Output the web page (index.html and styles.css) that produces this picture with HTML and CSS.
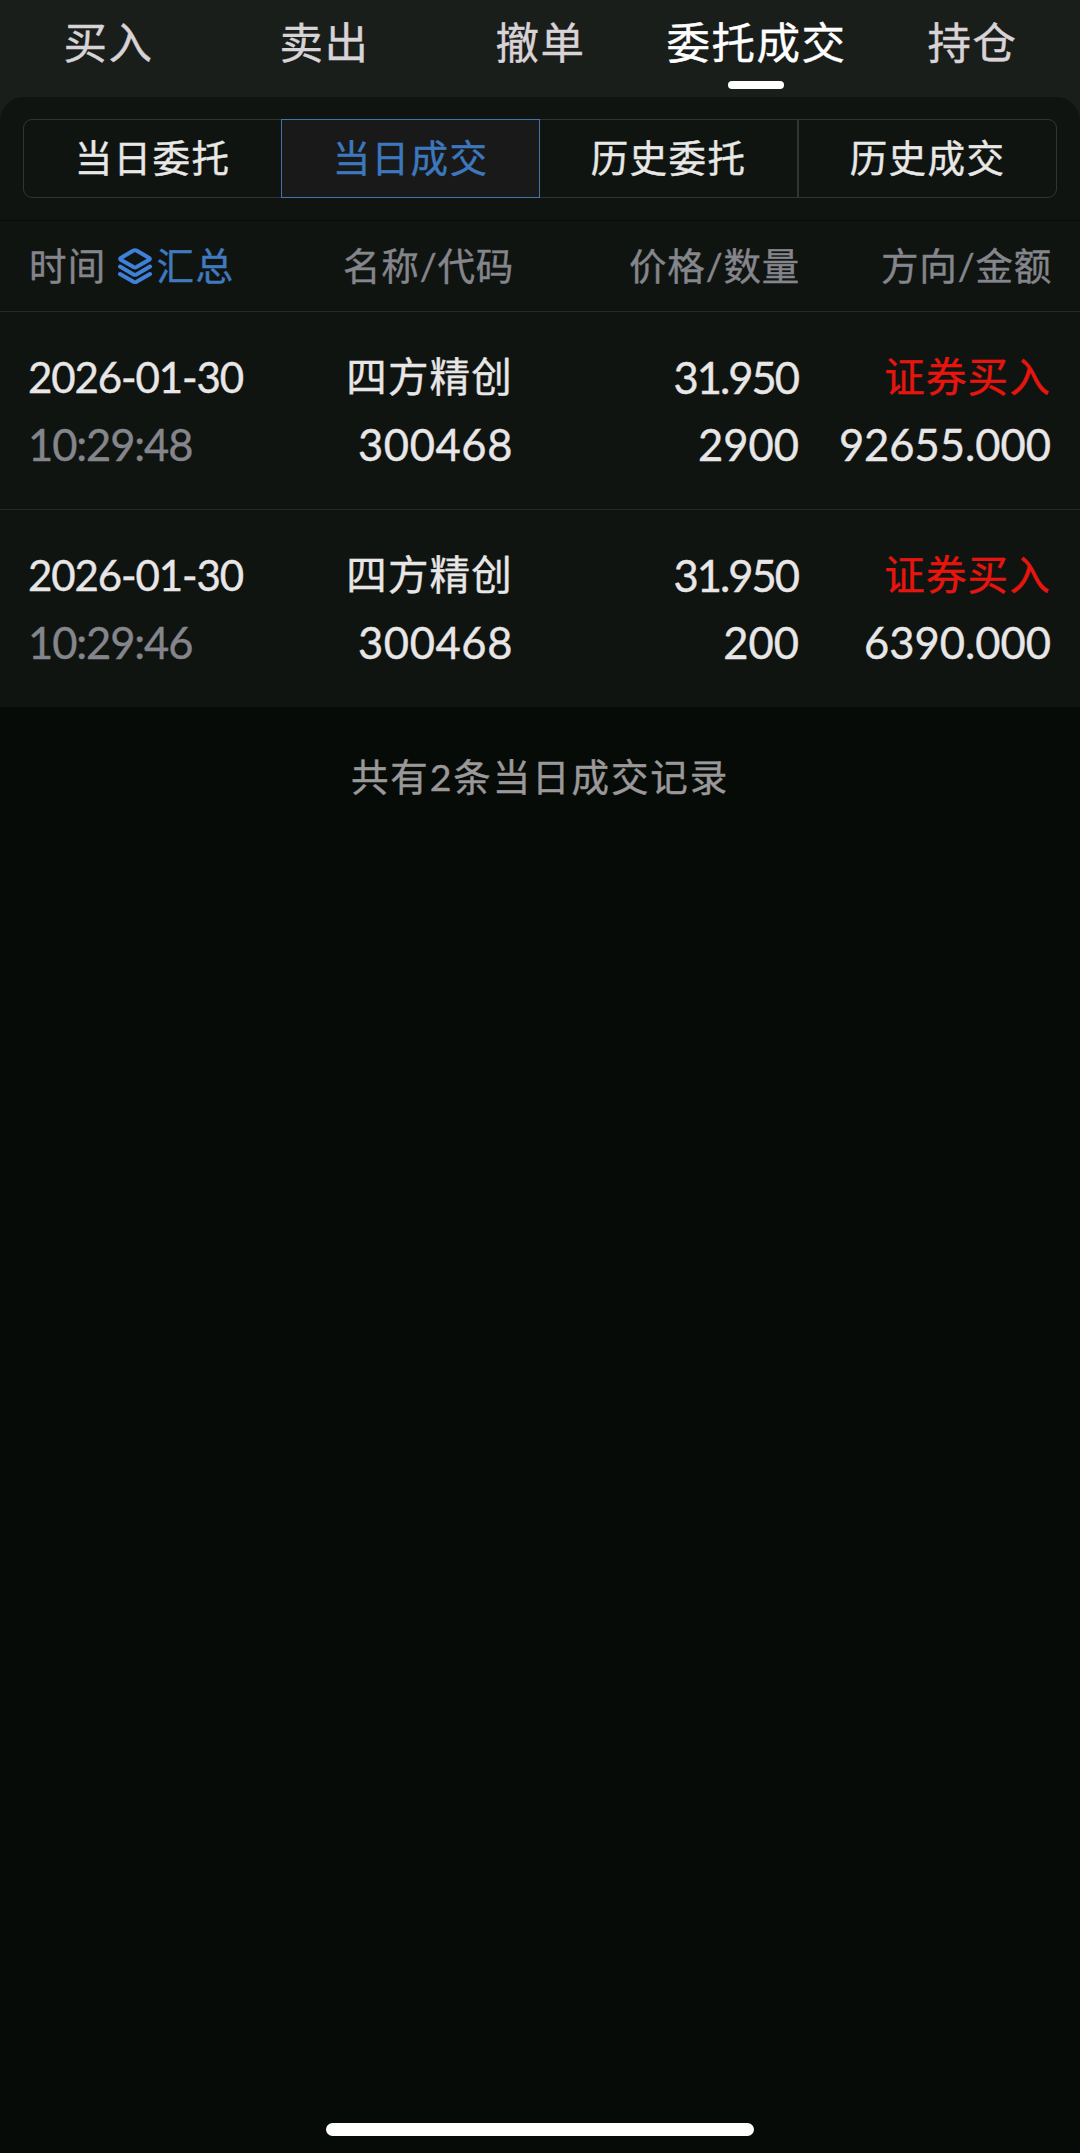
FILE: index.html
```html
<!DOCTYPE html>
<html lang="zh-CN">
  <head>
    <meta charset="UTF-8" />
    <meta name="viewport" content="width=device-width, initial-scale=1.0" />
    <title>当日成交</title>
    <link rel="stylesheet" href="styles.css">
  </head>
  <body>
    <nav class="tabs">
      <a class="tab">买入</a>
      <a class="tab">卖出</a>
      <a class="tab">撤单</a>
      <a class="tab active">委托成交</a>
      <a class="tab">持仓</a>
    </nav>
    <main>
      <section class="panel">
        <div class="segments">
          <button class="segment">当日委托</button>
          <button class="segment selected">当日成交</button>
          <button class="segment">历史委托</button>
          <button class="segment">历史成交</button>
        </div>
      </section>
      <section class="list">
        <div class="row head">
          <div class="time">
            <span>时间</span>
            <svg class="layers" viewBox="0 0 34 36" fill="none" stroke="currentColor" stroke-width="4" stroke-linecap="round" stroke-linejoin="round">
              <path d="M15.5 2.6Q17 1.8 18.5 2.6L31.2 9.9Q32.6 10.8 31.2 11.7L18.5 19Q17 19.8 15.5 19L2.8 11.7Q1.4 10.8 2.8 9.9Z" />
              <path d="M2 18.6L15.5 26.4Q17 27.2 18.5 26.4L32 18.6" />
              <path d="M2 26L15.5 33.8Q17 34.6 18.5 33.8L32 26" />
            </svg>
            <span class="summary">汇总</span>
          </div>
          <div>名称/代码</div>
          <div>价格/数量</div>
          <div>方向/金额</div>
        </div>
        <div class="row record">
          <div class="time">
            <p class="date">2026-01-30</p>
            <p class="clock">10:29:48</p>
          </div>
          <div>
            <p class="name">四方精创</p>
            <p class="code">300468</p>
          </div>
          <div>
            <p class="price">31.950</p>
            <p>2900</p>
          </div>
          <div>
            <p class="name buy">证券买入</p>
            <p class="amount">92655.000</p>
          </div>
        </div>
        <div class="row record">
          <div class="time">
            <p class="date">2026-01-30</p>
            <p class="clock">10:29:46</p>
          </div>
          <div>
            <p class="name">四方精创</p>
            <p class="code">300468</p>
          </div>
          <div>
            <p class="price">31.950</p>
            <p>200</p>
          </div>
          <div>
            <p class="name buy">证券买入</p>
            <p class="amount">6390.000</p>
          </div>
        </div>
      </section>
      <p class="total">共有2条当日成交记录</p>
    </main>
    <div class="home-bar"></div>
  </body>
</html>
```
FILE: styles.css
```css
* {
  box-sizing: border-box;
}
body {
  display: flex;
  flex-direction: column;
  height: 2153px;
  margin: 0;
  background-color: #060b07;
  font-family: Lato, "Noto Sans CJK SC", sans-serif;
  color: #e8e6e6;
  -webkit-text-stroke: 0.4px currentColor;
}
p {
  margin: 0;
}
.tabs {
  display: grid;
  grid-template-columns: repeat(5, 216px);
  height: 97px;
  background-color: #1a1e1b;
}
.tab {
  display: flex;
  flex-direction: column;
  align-items: center;
  font-size: 43.5px;
  letter-spacing: 1.5px;
  line-height: 81px;
  padding: 2px 0 0 1px;
  white-space: nowrap;
  color: #d8d3d6;
}
.tab.active {
  color: #fff;
}
.tab.active::after {
  content: "";
  width: 56px;
  height: 8px;
  margin: -2px 1px 0 0;
  border-radius: 4px;
  background-color: #fff;
}
main {
  flex: 1;
  background: linear-gradient(#1a1e1b 24px, transparent 24px);
}
.panel {
  height: 124px;
  padding: 22px 23px 0;
  border-bottom: 1px solid #080b09;
  border-radius: 24px 24px 0 0;
  background-color: #101411;
}
.segments {
  display: grid;
  grid-template-columns: 257px 259px 257px 259px;
  height: 79px;
  border: 1px solid #333432;
  border-radius: 9px;
}
.segment {
  margin: -1px 0;
  padding: 0 0 7px;
  border: 0;
  background: none;
  font-family: inherit;
  font-size: 37.5px;
  letter-spacing: 1.4px;
  color: #e8e8e6;
}
.segment:last-child {
  border-left: 2px solid #333432;
}
.segment.selected {
  border: 1px solid #4373a8;
  background-color: #191919;
  color: #3d78be;
}
.list {
  background-color: #101411;
}
.row {
  display: grid;
  grid-template-columns: 285px 200px 286px 252px;
  padding: 0 29px 0 28px;
  text-align: right;
}
.time {
  text-align: left;
}
.head {
  height: 91px;
  align-items: center;
  padding-bottom: 5px;
  padding-left: 29px;
  border-bottom: 1px solid #252826;
  font-size: 37.5px;
  letter-spacing: 0.8px;
  color: #85858c;
}
.head .time {
  display: flex;
  align-items: center;
  letter-spacing: 1.3px;
}
.layers {
  width: 34px;
  height: 36px;
  margin: 4px 5px 0 11px;
  color: #3f80d8;
}
.summary {
  color: #4079bd;
}
.record {
  height: 197px;
  padding-top: 32px;
  font-size: 43.5px;
  line-height: 67px;
  letter-spacing: 0;
}
.record + .record {
  height: 198px;
  border-top: 1px solid #252826;
}
.date {
  font-size: 42px;
  letter-spacing: -1.1px;
}
.clock {
  letter-spacing: -1.1px;
  color: #85858c;
}
.name {
  font-size: 40.5px;
  line-height: 66px;
  margin-bottom: 1px;
  letter-spacing: 1.2px;
}
.code {
  letter-spacing: 0.6px;
}
.price {
  padding-right: 1px;
  letter-spacing: -2px;
}
.amount {
  letter-spacing: 0;
}
.buy {
  color: #e8150f;
}
.total {
  margin-top: 42px;
  text-align: center;
  font-size: 37.5px;
  line-height: 56px;
  letter-spacing: 1.9px;
  color: #9b989a;
}
.home-bar {
  width: 428px;
  height: 13px;
  margin: 0 auto 17px;
  border-radius: 7px;
  background-color: #fff;
}
```
